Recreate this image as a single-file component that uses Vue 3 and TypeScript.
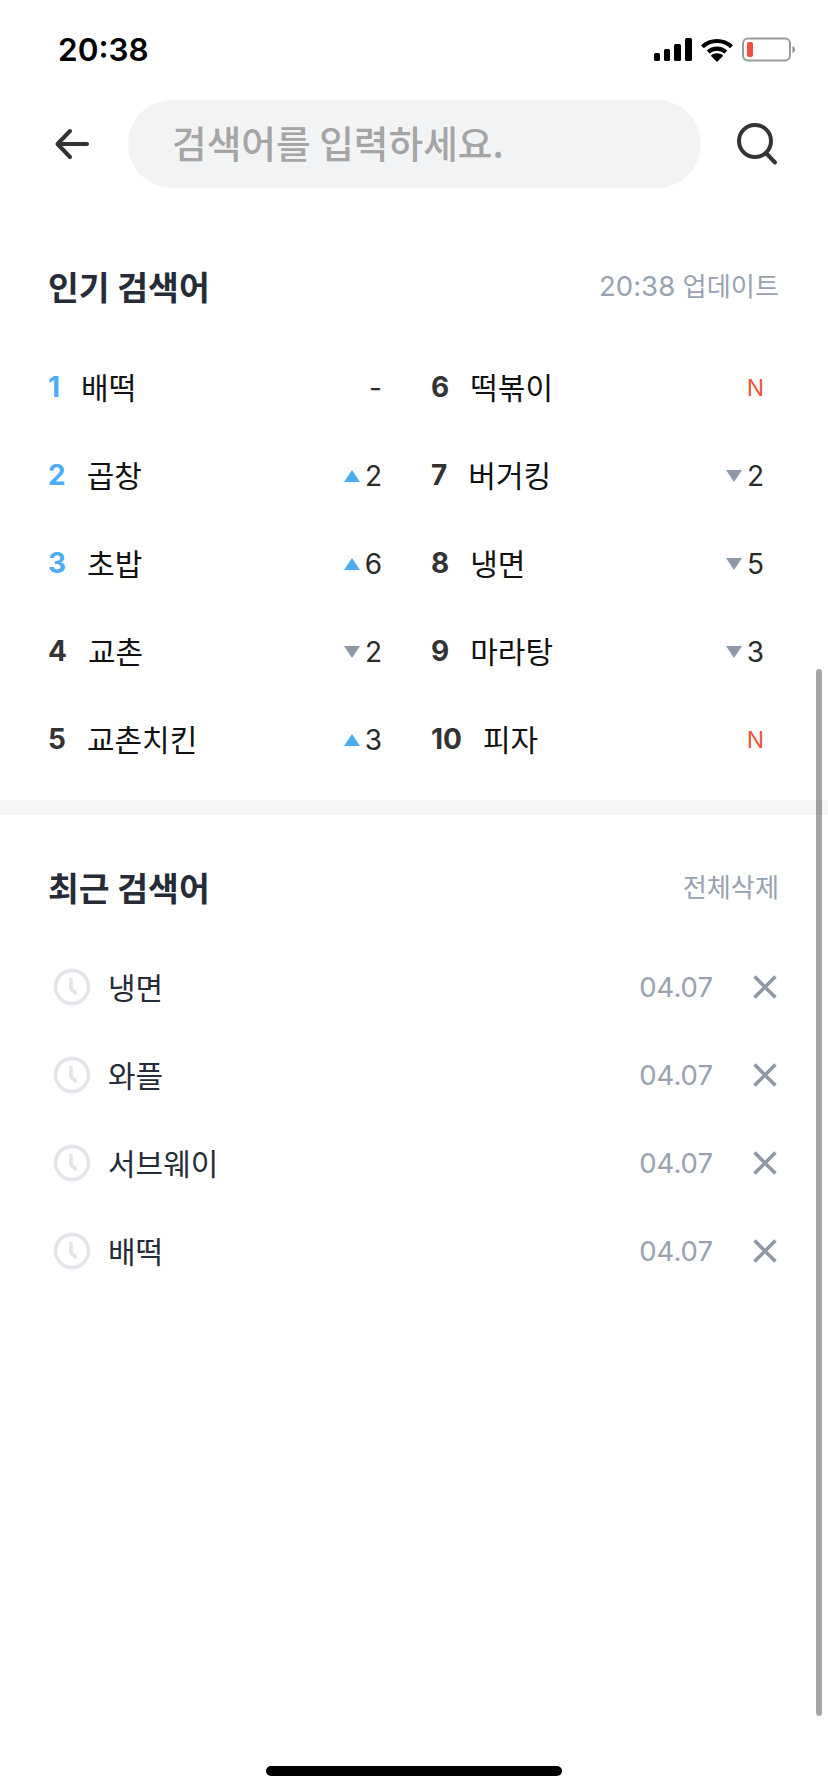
<template>
  <div class="screen">
    <div class="status-bar">
      <span class="status-time">20:38</span>
      <div class="status-icons">
        <svg width="38" height="24" viewBox="0 0 38 24">
          <rect x="0" y="15" width="6" height="8" rx="1.5" />
          <rect x="10" y="11" width="6" height="12" rx="1.5" />
          <rect x="20" y="6" width="7" height="17" rx="1.5" />
          <rect x="31" y="0" width="7" height="23" rx="1.5" />
        </svg>
        <svg width="34" height="25" viewBox="0 0 32 24">
          <path d="M2 8.5C10 1 22 1 30 8.5" class="wifi" />
          <path d="M7.5 13.5C12.5 9 19.5 9 24.5 13.5" class="wifi" />
          <path d="M16 23l-6-6c3.500-3 8.500-3 12 0z" />
        </svg>
        <svg class="battery" width="54" height="26" viewBox="0 0 54 26">
          <rect x="1" y="1.500" width="47" height="22" rx="5" class="battery-shell" />
          <rect x="5" y="5" width="6" height="15" rx="2" fill="#f04e3e" />
          <path d="M50.500 9v7c1.500-.5 2.500-2 2.500-3.500s-1-3-2.500-3.500z" fill="#8a8a8a" />
        </svg>
      </div>
    </div>

    <div class="search-row">
      <svg class="back" width="36" height="36" viewBox="0 0 36 36">
        <path d="M33 18H4M16 5 3.500 18 16 31" />
      </svg>
      <div class="search-box">검색어를 입력하세요.</div>
      <svg class="search-icon" width="44" height="44" viewBox="0 0 44 44">
        <circle cx="20" cy="19" r="16" />
        <path d="M31 31l9 9.500" />
      </svg>
    </div>

    <section class="popular">
      <div class="section-head">
        <h2>인기 검색어</h2>
        <span class="head-side"><span class="head-time">20:38</span> 업데이트</span>
      </div>
      <div class="rank-grid">
        <div v-for="item in ranks" :key="item.rank" class="rank-row">
          <span class="rank-num" :class="{ top: item.rank <= 3 }">{{ item.rank }}</span>
          <span class="rank-name">{{ item.name }}</span>
          <span class="rank-trend">
            <i v-if="item.dir === 'up'" class="tri tri-up"></i>
            <i v-if="item.dir === 'down'" class="tri tri-down"></i>
            <span :class="{ 'is-new': item.change === 'N' }">{{ item.change }}</span>
          </span>
        </div>
      </div>
    </section>

    <div class="divider"></div>

    <section class="recent">
      <div class="section-head">
        <h2>최근 검색어</h2>
        <span class="head-side">전체삭제</span>
      </div>
      <div v-for="word in recent" :key="word" class="recent-row">
        <svg class="clock" width="38" height="38" viewBox="0 0 38 38">
          <circle cx="19" cy="19" r="16.500" />
          <path d="M18 11v9.500l4.500 4.500" />
        </svg>
        <span class="recent-name">{{ word }}</span>
        <span class="recent-date">04.07</span>
        <svg class="remove" width="26" height="26" viewBox="0 0 26 26">
          <path d="M2.500 2.500l21 21M23.500 2.500l-21 21" />
        </svg>
      </div>
    </section>

    <div class="scrollbar"></div>
    <div class="home-bar"></div>
  </div>
</template>

<script setup lang="ts">
type Trend = 'up' | 'down' | 'none'

interface RankItem {
  rank: number
  name: string
  dir: Trend
  change: string
}

const ranks: RankItem[] = [
  { rank: 1, name: '배떡', dir: 'none', change: '-' },
  { rank: 6, name: '떡볶이', dir: 'none', change: 'N' },
  { rank: 2, name: '곱창', dir: 'up', change: '2' },
  { rank: 7, name: '버거킹', dir: 'down', change: '2' },
  { rank: 3, name: '초밥', dir: 'up', change: '6' },
  { rank: 8, name: '냉면', dir: 'down', change: '5' },
  { rank: 4, name: '교촌', dir: 'down', change: '2' },
  { rank: 9, name: '마라탕', dir: 'down', change: '3' },
  { rank: 5, name: '교촌치킨', dir: 'up', change: '3' },
  { rank: 10, name: '피자', dir: 'none', change: 'N' }
]

const recent = ['냉면', '와플', '서브웨이', '배떡']
</script>

<style>
html,
body {
  margin: 0;
  background: #fff;
}
</style>

<style scoped>
.screen {
  position: relative;
  width: 828px;
  height: 1792px;
  overflow: hidden;
  background: #fff;
  font-family: Inter, "Noto Sans CJK KR", sans-serif;
  color: #222;
}

.status-bar {
  height: 100px;
  box-sizing: border-box;
  padding: 32px 32px 0 58px;
  display: flex;
  justify-content: space-between;
  align-items: flex-start;
}

.status-time {
  font-size: 31.500px;
  line-height: 36px;
  font-weight: 600;
  color: #000;
}

.status-icons {
  display: flex;
  align-items: center;
  gap: 8px;
  margin-top: 5px;
}

.wifi {
  fill: none;
  stroke: #000;
  stroke-width: 4;
}

.battery-shell {
  fill: #fff;
  stroke: #9a9a9a;
  stroke-width: 2;
}

.search-row {
  height: 88px;
  display: flex;
  align-items: center;
  padding: 0 50px 0 54px;
}

.back {
  width: 36px;
  flex: none;
  margin-right: 38px;
}

.back path,
.search-icon circle,
.search-icon path {
  fill: none;
  stroke: #333;
  stroke-width: 4;
  stroke-linecap: round;
  stroke-linejoin: round;
}

.search-box {
  width: 573px;
  height: 88px;
  flex: none;
  box-sizing: border-box;
  padding-left: 44px;
  border-radius: 44px;
  background: #f2f3f5;
  color: #a5a5a5;
  font-family: "Noto Sans CJK KR", sans-serif;
  font-size: 37.700px;
  font-weight: 500;
  line-height: 84px;
}

.search-icon {
  flex: none;
  margin-left: 34px;
}

.section-head {
  display: flex;
  justify-content: space-between;
  align-items: center;
  height: 48px;
  padding-right: 49px;
}

.section-head h2 {
  margin: 0;
  font-family: "Noto Sans CJK KR", sans-serif;
  font-size: 33.500px;
  font-weight: 700;
  color: #252c38;
}

.head-side {
  font-size: 26.200px;
  color: #98a2b1;
}

.head-time {
  font-size: 27.600px;
}

.popular {
  padding: 73px 0 17px 48px;
}

.rank-grid {
  margin-top: 34px;
  display: grid;
  grid-template-columns: 334px 333px;
  column-gap: 49px;
  grid-auto-rows: 88px;
}

.rank-row {
  display: flex;
  align-items: center;
}

.rank-num {
  font-size: 28px;
  font-weight: 700;
  color: #333;
  margin-right: 21px;
}

.rank-num.top {
  color: #4bacf7;
}

.rank-name {
  flex: 1;
  font-family: "Noto Sans CJK KR", sans-serif;
  font-size: 30px;
  line-height: 44px;
  margin-bottom: 2px;
  color: #111;
}

.rank-trend {
  display: flex;
  align-items: center;
  gap: 5px;
  font-size: 28px;
  color: #2a2a2a;
  margin-top: 2px;
}

.tri {
  width: 0;
  height: 0;
  border-left: 8px solid transparent;
  border-right: 8px solid transparent;
}

.tri-up {
  border-bottom: 12px solid #4bacf7;
}

.tri-down {
  border-top: 12px solid #8e98a6;
}

.is-new {
  font-size: 23px;
  color: #f0553f;
}

.divider {
  height: 15px;
  background: #f4f5f7;
}

.recent {
  padding: 47px 0 0 48px;
}

.recent-row {
  height: 88px;
  display: flex;
  align-items: center;
  padding-right: 50px;
}

.recent .section-head {
  margin-bottom: 33px;
}

.clock {
  flex: none;
  margin-left: 5px;
}

.clock circle,
.clock path {
  fill: none;
  stroke: #e1e4e9;
  stroke-width: 3.500;
  stroke-linecap: round;
  stroke-linejoin: round;
}

.recent-name {
  flex: 1;
  margin-left: 17px;
  margin-bottom: 3px;
  font-family: "Noto Sans CJK KR", sans-serif;
  font-size: 30px;
  color: #252c38;
}

.recent-date {
  font-size: 27.500px;
  color: #98a2b1;
  margin-right: 39px;
}

.remove path {
  fill: none;
  stroke: #8e98a6;
  stroke-width: 3.500;
}

.scrollbar {
  position: absolute;
  left: 816px;
  top: 669px;
  width: 6px;
  height: 1047px;
  border-radius: 3px;
  background: rgba(0, 0, 0, 0.35);
}

.home-bar {
  position: absolute;
  left: 266px;
  top: 1766px;
  width: 296px;
  height: 10px;
  border-radius: 5px;
  background: #000;
}
</style>
